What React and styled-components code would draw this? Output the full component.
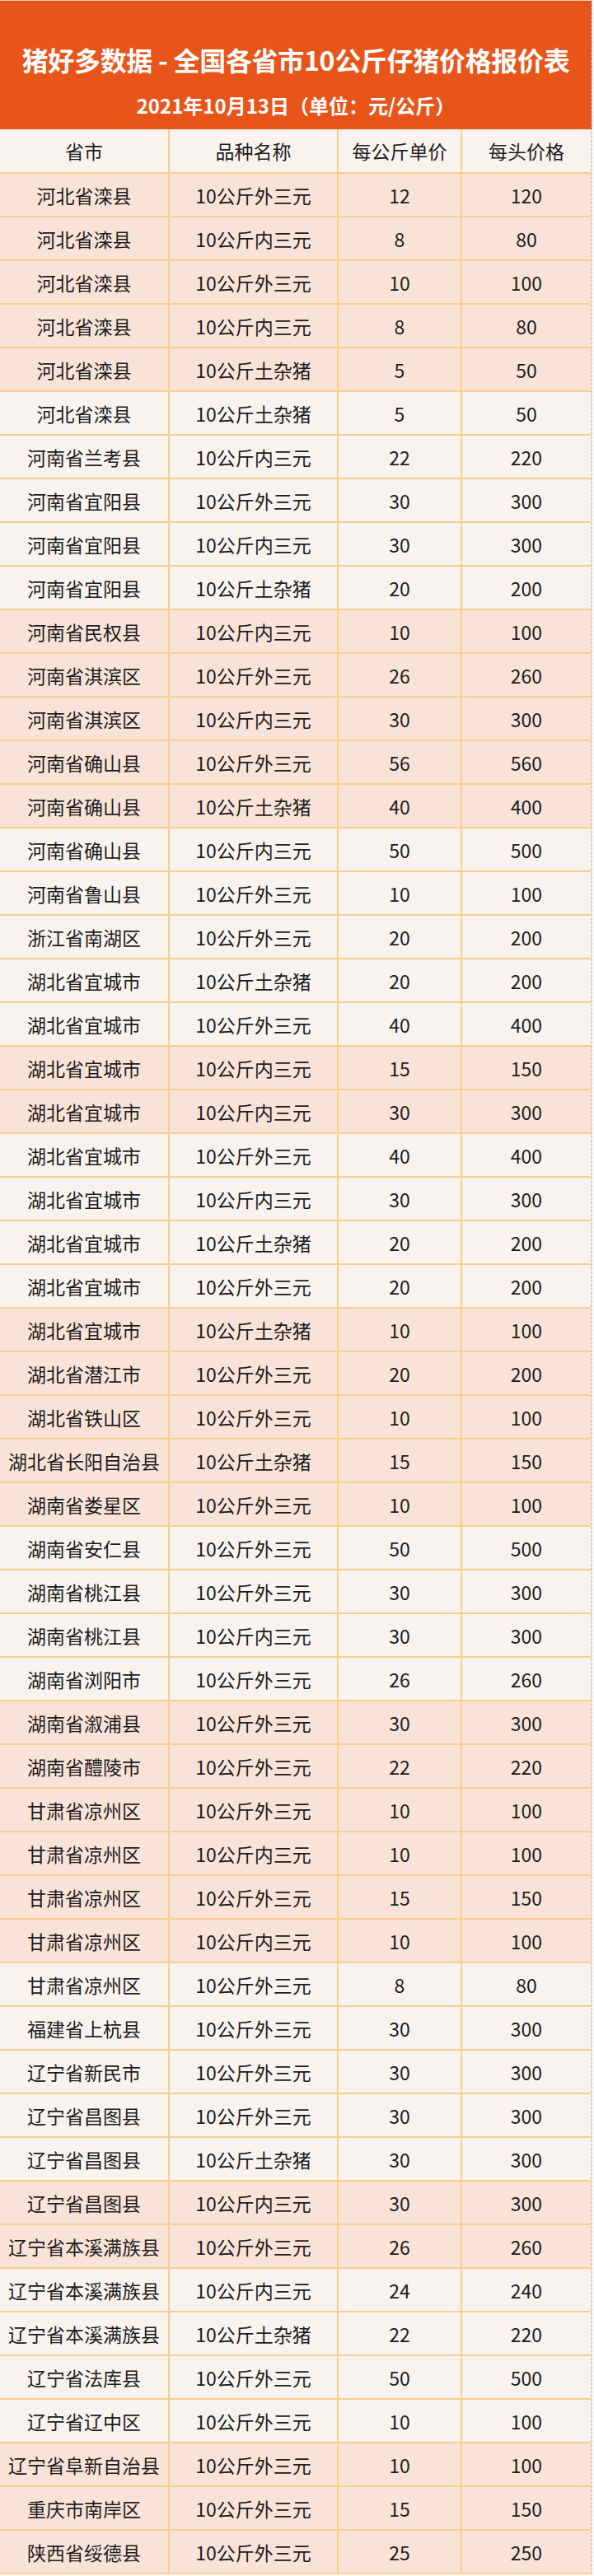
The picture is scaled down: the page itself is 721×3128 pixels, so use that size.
import React from "react";
import styled, { createGlobalStyle } from "styled-components";

const GlobalStyle = createGlobalStyle`
  html, body { margin: 0; padding: 0; background: #ffffff; }
  body { font-family: "Noto Sans CJK SC", "Noto Sans", sans-serif; }
  * { box-sizing: border-box; }
`;

const Page = styled.div`
  width: 719px;
  border-right: 1px dashed #b8b8b8;
`;

const Banner = styled.header`
  height: 157px;
  background: #e8551a;
  border-top: 1px solid #f4c9b0;
  display: flex;
  flex-direction: column;
  align-items: center;
  padding-top: 51px;
  color: #ffffff;
  font-weight: 700;
`;

const Title = styled.h1`
  margin: 0;
  font-size: 32px;
  line-height: 40px;
  font-weight: 700;
  white-space: nowrap;
  letter-spacing: -0.3px;
`;

const Subtitle = styled.div`
  margin-top: 21px;
  font-size: 24px;
  line-height: 30px;
  white-space: nowrap;
`;

const Grid = styled.div`
  display: grid;
  grid-template-columns: 206px 205px 150px 157px;
`;

const Cell = styled.div`
  height: ${(p) => (p.$head ? 54 : 53)}px;
  display: flex;
  align-items: center;
  justify-content: center;
  background: ${(p) => (p.$pink ? "#f9e3d8" : "#f8f3ef")};
  border-bottom: 2px solid #f9cd8c;
  border-right: 2px solid #f9cd8c;
  font-size: 23px;
  color: #1c1c1c;
  white-space: nowrap;
  &:nth-child(4n) {
    border-right: 1px solid #f3d9c0;
  }
`;

const raw = `河北省滦县|10公斤外三元|12|120
河北省滦县|10公斤内三元|8|80
河北省滦县|10公斤外三元|10|100
河北省滦县|10公斤内三元|8|80
河北省滦县|10公斤土杂猪|5|50
河北省滦县|10公斤土杂猪|5|50
河南省兰考县|10公斤内三元|22|220
河南省宜阳县|10公斤外三元|30|300
河南省宜阳县|10公斤内三元|30|300
河南省宜阳县|10公斤土杂猪|20|200
河南省民权县|10公斤内三元|10|100
河南省淇滨区|10公斤外三元|26|260
河南省淇滨区|10公斤内三元|30|300
河南省确山县|10公斤外三元|56|560
河南省确山县|10公斤土杂猪|40|400
河南省确山县|10公斤内三元|50|500
河南省鲁山县|10公斤外三元|10|100
浙江省南湖区|10公斤外三元|20|200
湖北省宜城市|10公斤土杂猪|20|200
湖北省宜城市|10公斤外三元|40|400
湖北省宜城市|10公斤内三元|15|150
湖北省宜城市|10公斤内三元|30|300
湖北省宜城市|10公斤外三元|40|400
湖北省宜城市|10公斤内三元|30|300
湖北省宜城市|10公斤土杂猪|20|200
湖北省宜城市|10公斤外三元|20|200
湖北省宜城市|10公斤土杂猪|10|100
湖北省潜江市|10公斤外三元|20|200
湖北省铁山区|10公斤外三元|10|100
湖北省长阳自治县|10公斤土杂猪|15|150
湖南省娄星区|10公斤外三元|10|100
湖南省安仁县|10公斤外三元|50|500
湖南省桃江县|10公斤外三元|30|300
湖南省桃江县|10公斤内三元|30|300
湖南省浏阳市|10公斤外三元|26|260
湖南省溆浦县|10公斤外三元|30|300
湖南省醴陵市|10公斤外三元|22|220
甘肃省凉州区|10公斤外三元|10|100
甘肃省凉州区|10公斤内三元|10|100
甘肃省凉州区|10公斤外三元|15|150
甘肃省凉州区|10公斤内三元|10|100
甘肃省凉州区|10公斤外三元|8|80
福建省上杭县|10公斤外三元|30|300
辽宁省新民市|10公斤外三元|30|300
辽宁省昌图县|10公斤外三元|30|300
辽宁省昌图县|10公斤土杂猪|30|300
辽宁省昌图县|10公斤内三元|30|300
辽宁省本溪满族县|10公斤外三元|26|260
辽宁省本溪满族县|10公斤内三元|24|240
辽宁省本溪满族县|10公斤土杂猪|22|220
辽宁省法库县|10公斤外三元|50|500
辽宁省辽中区|10公斤外三元|10|100
辽宁省阜新自治县|10公斤外三元|10|100
重庆市南岸区|10公斤外三元|15|150
陕西省绥德县|10公斤外三元|25|250`;

const pinkRanges = [
  [1, 5], [11, 15], [21, 22], [27, 31], [36, 41], [47, 48], [53, 55],
];
const isPink = (n) => pinkRanges.some(([a, b]) => n >= a && n <= b);

const rows = raw.split("\n").map((line, i) => ({
  cells: line.split("|"),
  pink: isPink(i + 1),
}));

const headers = ["省市", "品种名称", "每公斤单价", "每头价格"];

export default function App() {
  return (
    <>
      <GlobalStyle />
      <Page>
        <Banner>
          <Title>猪好多数据 - 全国各省市10公斤仔猪价格报价表</Title>
          <Subtitle>2021年10月13日（单位：元/公斤）</Subtitle>
        </Banner>
        <Grid>
          {headers.map((h) => (
            <Cell key={h} $head>
              {h}
            </Cell>
          ))}
          {rows.map((r, i) =>
            r.cells.map((c, j) => (
              <Cell key={`${i}-${j}`} $pink={r.pink}>
                {c}
              </Cell>
            ))
          )}
        </Grid>
      </Page>
    </>
  );
}
